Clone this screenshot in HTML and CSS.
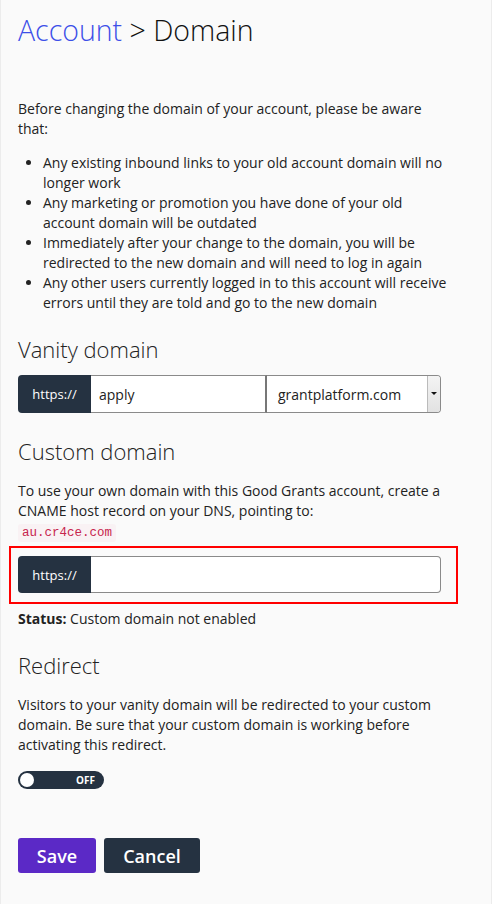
FILE: index.html
```html
<!DOCTYPE html>
<html lang="en">
<head>
    <meta charset="UTF-8">
    <meta name="viewport" content="width=device-width, initial-scale=1.0">
    <title>Account &gt; Domain</title>
    <link rel="stylesheet" href="styles.css">
</head>
<body>
    <div class="page">
        <h1 class="title"><a href="#" class="crumb">Account</a> &gt; Domain</h1>

        <p class="intro">Before changing the domain of your account, please be aware that:</p>
        <ul class="warnings">
            <li>Any existing inbound links to your old account domain will no longer work</li>
            <li>Any marketing or promotion you have done of your old account domain will be outdated</li>
            <li>Immediately after your change to the domain, you will be redirected to the new domain and will need to log in again</li>
            <li>Any other users currently logged in to this account will receive errors until they are told and go to the new domain</li>
        </ul>

        <h2 class="section-title">Vanity domain</h2>
        <div class="input-group">
            <span class="addon">https://</span>
            <input type="text" class="field field-sub" value="apply">
            <div class="select">
                <span class="select-value">grantplatform.com</span>
                <span class="select-arrow"></span>
            </div>
        </div>

        <h2 class="section-title">Custom domain</h2>
        <p class="help">To use your own domain with this Good Grants account, create a CNAME host record on your DNS, pointing to:<br><code>au.cr4ce.com</code></p>
        <div class="highlight">
            <div class="input-group">
                <span class="addon">https://</span>
                <input type="text" class="field field-full" value="">
            </div>
        </div>
        <p class="status"><strong>Status:</strong> Custom domain not enabled</p>

        <h2 class="section-title">Redirect</h2>
        <p class="help">Visitors to your vanity domain will be redirected to your custom domain. Be sure that your custom domain is working before activating this redirect.</p>
        <div class="toggle">
            <span class="knob"></span>
            <span class="toggle-label">OFF</span>
        </div>

        <div class="actions">
            <button class="btn btn-save">Save</button>
            <button class="btn btn-cancel">Cancel</button>
        </div>
    </div>
</body>
</html>
```

FILE: styles.css
```css
html, body {
    margin: 0;
    padding: 0;
    background: #fafafa;
}
body {
    font-family: "Open Sans", Arial, sans-serif;
    font-size: 14px;
    line-height: 20px;
    color: #222;
}
.page {
    min-height: 904px;
    box-sizing: border-box;
    padding: 8px 39px 0 17px;
    border-left: 1px solid #ececec;
    border-right: 1px solid #ececec;
}
.title {
    font-size: 28.5px;
    font-weight: 300;
    line-height: 44px;
    margin: 0 0 47px 0;
    color: #111;
}
.crumb {
    color: #3d4fe8;
    text-decoration: none;
}
.intro {
    margin: 0 0 14px 0;
}
.warnings {
    margin: 0 0 21px 0;
    padding-left: 25px;
}
.section-title {
    font-size: 22px;
    font-weight: 300;
    line-height: 30px;
    margin: 0 0 11px 0;
    color: #222;
}
.input-group {
    display: flex;
    width: 423px;
    height: 38px;
    margin-bottom: 23px;
}
.addon {
    display: flex;
    align-items: center;
    justify-content: center;
    width: 73px;
    background: #253241;
    color: #fff;
    font-size: 13px;
    border-radius: 4px 0 0 4px;
    flex-shrink: 0;
}
.field {
    box-sizing: border-box;
    height: 100%;
    border: 1px solid #8a8a8a;
    border-left: none;
    background: #fff;
    font-family: "Open Sans", Arial, sans-serif;
    font-size: 14px;
    color: #222;
    padding: 0 8px;
    outline: none;
}
.field-sub {
    width: 176px;
    border-right: 2px solid #777;
}
.field-full {
    flex: 1;
    border-radius: 0 4px 4px 0;
}
.select {
    flex: 1;
    display: flex;
    box-sizing: border-box;
    border: 1px solid #8a8a8a;
    border-left: none;
    border-radius: 0 4px 4px 0;
    background: #fff;
}
.select-value {
    flex: 1;
    display: flex;
    align-items: center;
    padding-left: 11px;
    padding-top: 1px;
}
.select-arrow {
    width: 12px;
    border-left: 1px solid #bbb;
    background: linear-gradient(#f4f4f4, #e2e2e2);
    border-radius: 0 3px 3px 0;
    position: relative;
}
.select-arrow::after {
    content: "";
    position: absolute;
    left: 3px;
    top: 16px;
    border-left: 3px solid transparent;
    border-right: 3px solid transparent;
    border-top: 3px solid #111;
}
.help {
    margin: 15px 0 0 0;
}
code {
    font-family: "Liberation Mono", "DejaVu Sans Mono", monospace;
    font-size: 12.5px;
    color: #c7254e;
    background: #f9f2f4;
    padding: 2px 4px;
    border-radius: 3px;
}
.highlight {
    width: 449px;
    margin: 3px 0 0 -9px;
    border: 2px solid #f00;
    padding: 8px 7px 9px 7px;
    box-sizing: border-box;
}
.highlight .input-group {
    margin-bottom: 0;
    height: 37px;
}
.status {
    margin: 5px 0 21px 0;
}
.toggle {
    display: flex;
    align-items: center;
    width: 86px;
    height: 18px;
    background: #253241;
    border-radius: 9px;
    margin-top: 16px;
    box-sizing: border-box;
    padding: 0 9px 0 2px;
}
.knob {
    width: 14px;
    height: 14px;
    border-radius: 50%;
    background: #fff;
}
.toggle-label {
    margin-left: auto;
    color: #fff;
    font-size: 10px;
    font-weight: 700;
    line-height: 18px;
}
.actions {
    display: flex;
    gap: 8px;
    margin-top: 49px;
}
.btn {
    height: 35px;
    border: none;
    border-radius: 3px;
    color: #fff;
    font-family: "Open Sans", Arial, sans-serif;
    font-size: 18px;
    font-weight: 600;
    padding: 0;
    cursor: pointer;
}
.btn-save {
    background: #5b29c6;
    width: 78px;
}
.btn-cancel {
    background: #253241;
    width: 96px;
}
```
